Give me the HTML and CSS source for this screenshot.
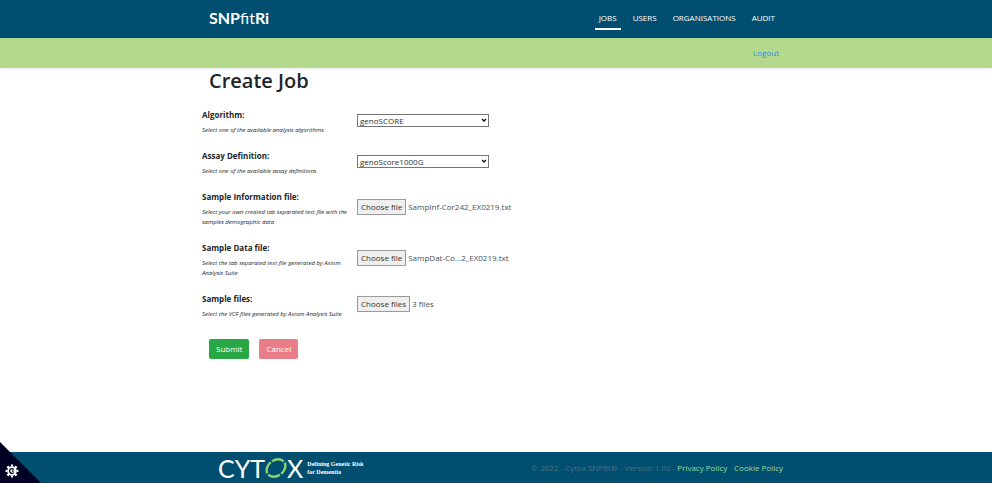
FILE: index.html
```html
<!DOCTYPE html>
<html lang="en">
  <head>
    <meta charset="utf-8" />
    <meta name="viewport" content="width=device-width, initial-scale=1" />
    <title>Create Job - SNPfitRi</title>
    <link rel="stylesheet" href="styles.css">
  </head>
  <body>
    <header>
      <div class="navbar">
        <div class="container bar">
          <a class="brand" href="#"><b>SNP</b>fit<b>Ri</b></a>
          <nav class="menu">
            <a class="active" href="#">JOBS</a>
            <a href="#">USERS</a>
            <a href="#">ORGANISATIONS</a>
            <a href="#">AUDIT</a>
          </nav>
        </div>
      </div>
      <div class="subbar">
        <div class="container bar">
          <a class="logout" href="#">Logout</a>
        </div>
      </div>
    </header>

    <main class="container">
      <h1>Create Job</h1>
      <form>
        <div class="fields">
          <div class="row">
            <div>
              <label class="title" for="algorithm">Algorithm:</label>
              <p class="hint">Select one of the available analysis algorithms</p>
            </div>
            <div class="control">
              <div class="select">
                <select id="algorithm">
                  <option>genoSCORE</option>
                </select>
                <svg width="6" height="4" viewBox="0 0 6 4"><path d="M1 1L3 3L5 1" /></svg>
              </div>
            </div>
          </div>
          <div class="row">
            <div>
              <label class="title" for="assay">Assay Definition:</label>
              <p class="hint">Select one of the available assay definitions</p>
            </div>
            <div class="control">
              <div class="select">
                <select id="assay">
                  <option>genoScore1000G</option>
                </select>
                <svg width="6" height="4" viewBox="0 0 6 4"><path d="M1 1L3 3L5 1" /></svg>
              </div>
            </div>
          </div>
          <div class="row">
            <div>
              <label class="title" for="sample-info">Sample Information file:</label>
              <p class="hint">Select your own created tab separated text file with the samples demographic data</p>
            </div>
            <div class="control">
              <input class="file-input" id="sample-info" type="file" />
              <label class="file-button" for="sample-info">Choose file</label>
              <span>SampInf-Cor242_EX0219.txt</span>
            </div>
          </div>
          <div class="row">
            <div>
              <label class="title" for="sample-data">Sample Data file:</label>
              <p class="hint">Select the tab separated text file generated by Axiom Analysis Suite</p>
            </div>
            <div class="control">
              <input class="file-input" id="sample-data" type="file" />
              <label class="file-button" for="sample-data">Choose file</label>
              <span>SampDat-Co...2_EX0219.txt</span>
            </div>
          </div>
          <div class="row">
            <div>
              <label class="title" for="sample-files">Sample files:</label>
              <p class="hint">Select the VCF files generated by Axiom Analysis Suite</p>
            </div>
            <div class="control">
              <input class="file-input" id="sample-files" type="file" multiple />
              <label class="file-button" for="sample-files">Choose files</label>
              <span>3 files</span>
            </div>
          </div>
        </div>
        <div class="actions">
          <button class="btn submit" type="submit">Submit</button>
          <button class="btn cancel" type="button">Cancel</button>
        </div>
      </form>
    </main>

    <footer>
      <div class="container bar">
        <a class="cytox" href="#">
          <span class="cytox-name">CYT<svg width="22" height="22" viewBox="0 0 22 22" fill="none" stroke="#8fd06c" stroke-width="2.4"><ellipse cx="11" cy="11" rx="10.2" ry="7.8" pathLength="100" stroke-dasharray="22 3" stroke-dashoffset="-2" transform="rotate(-38 11 11)" /></svg>X</span>
          <span class="tagline">Defining Genetic Risk<br />for Dementia</span>
        </a>
        <p class="legal">
          © 2022 - Cytox SNPfitRi - Version 1.02 -
          <a href="#">Privacy Policy</a> - <a href="#">Cookie Policy</a>
        </p>
      </div>
    </footer>

    <button class="cookie-button" type="button" aria-label="Cookie settings">
      <svg width="14" height="14" viewBox="0 0 14 14" fill="none" stroke="#fff">
        <circle cx="7" cy="7" r="4.8" fill="#fff" stroke="none" />
        <circle cx="7" cy="7" r="5.5" stroke-width="2" pathLength="16" stroke-dasharray="1 1" stroke-dashoffset="0.5" />
        <path d="M8.8 5.4A2.4 2.4 0 1 0 8.8 8.6M7 7H8.6" stroke="#000024" stroke-width="1.3" />
      </svg>
    </button>
  </body>
</html>
```
FILE: styles.css
```css
* {
  box-sizing: border-box;
}
body {
  display: flex;
  flex-direction: column;
  min-height: 100vh;
  margin: 0;
  background-color: #fff;
  color: #212529;
  font-family: "Segoe UI", "Open Sans", "Noto Sans", sans-serif;
  font-size: 8px;
  line-height: 12px;
}
a {
  text-decoration: none;
}
p {
  margin: 0;
}
.container {
  width: 100%;
  max-width: 590px;
  margin: 0 auto;
  padding: 0 8px;
}
.bar {
  display: flex;
  align-items: center;
  justify-content: space-between;
}

/* header */
header {
  box-shadow: 0 1px 6px rgba(0, 0, 0, 0.08);
}
.navbar {
  background-color: #004f71;
}
.navbar .bar {
  height: 38px;
  padding-bottom: 2px;
}
.brand {
  color: #fff;
  font-family: Lato, sans-serif;
  font-size: 16px;
  line-height: 16px;
}
.menu {
  display: flex;
}
.menu a {
  margin: 0 4px;
  padding: 5px 4px 4px;
  border-bottom: 2px solid transparent;
  color: #fff;
}
.menu a.active {
  border-color: #fff;
}
.subbar {
  background-color: #b4d98d;
}
.subbar .bar {
  height: 30px;
  justify-content: flex-end;
}
.logout {
  padding: 0 4px;
  color: #2b8be6;
}

/* form */
main {
  flex: 1;
}
h1 {
  margin: 1px 0 16px;
  font-size: 20px;
  font-weight: 600;
  line-height: 24px;
}
.fields {
  display: grid;
  gap: 15px;
  margin: 0 -7px;
}
.row {
  display: grid;
  grid-template-columns: 149px 1fr;
  column-gap: 6px;
  align-items: center;
}
.title {
  display: block;
  font-weight: 700;
}
.hint {
  margin-top: 4px;
  font-size: 6px;
  font-style: italic;
  line-height: 10px;
}
.control {
  display: flex;
  align-items: center;
  gap: 2px;
  padding-bottom: 4px;
  color: #495057;
}
.select {
  position: relative;
  display: flex;
}
.select svg {
  position: absolute;
  top: 4px;
  right: 2px;
  fill: none;
  stroke: #111;
  stroke-width: 1.3;
  pointer-events: none;
}
select {
  width: 132px;
  height: 13px;
  padding: 0 2px;
  border: 1px solid #767676;
  border-radius: 0;
  background-color: #fff;
  color: #333;
  font: inherit;
  line-height: 11px;
  appearance: none;
}
.file-input {
  position: absolute;
  width: 1px;
  height: 1px;
  opacity: 0;
}
.file-button {
  padding: 1px 3px;
  border: 1px solid #9a9a9a;
  background-color: #efefef;
  color: #333;
  cursor: pointer;
}
.actions {
  display: flex;
  gap: 10px;
  margin: 20px 0;
}
.btn {
  height: 20px;
  padding: 0 7px;
  border: 0;
  border-radius: 2px;
  color: #fff;
  font: inherit;
  cursor: pointer;
}
.submit {
  background-color: #28a745;
}
.cancel {
  background-color: #e97e88;
}

/* footer */
footer {
  background-color: #004f71;
}
footer .bar {
  height: 31px;
}
.cytox {
  display: flex;
  align-items: center;
  gap: 4px;
  margin-left: 9px;
  color: #fff;
}
.cytox-name {
  display: flex;
  align-items: center;
  font-family: Lato, sans-serif;
  font-size: 25px;
  line-height: 28px;
}
.tagline {
  font-family: "Liberation Serif", serif;
  font-size: 6px;
  font-weight: 700;
  line-height: 8px;
}
.legal {
  color: #4c7083;
}
.legal a {
  color: #9fdc9a;
}

/* corner button over the footer */
.cookie-button {
  position: fixed;
  bottom: 0;
  left: 0;
  display: flex;
  align-items: flex-end;
  width: 41px;
  height: 41px;
  padding: 5px;
  border: 0;
  background-color: #000024;
  clip-path: polygon(0 0, 100% 100%, 0 100%);
  cursor: pointer;
}
```
